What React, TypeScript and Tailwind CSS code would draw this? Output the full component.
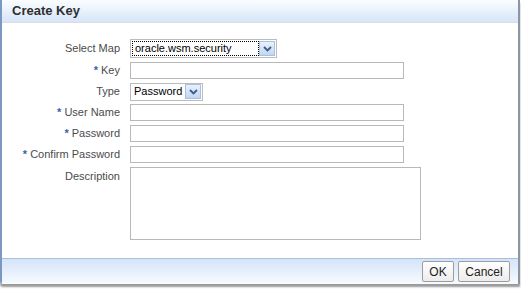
import React from 'react'

const FONT = { fontFamily: '"Liberation Sans", Arial, sans-serif' }

function Chevron() {
  return (
    <span className="flex h-[15px] w-[16px] items-center justify-center border border-[#a9bfe0] bg-gradient-to-b from-[#e9f1fc] to-[#c3d6f1]">
      <svg width="9" height="6" viewBox="0 0 9 6">
        <path d="M1 1 L4.5 4.5 L8 1" fill="none" stroke="#3f5a8c" strokeWidth="1.8" />
      </svg>
    </span>
  )
}

function Label({ text, req }: { text: string; req?: boolean }) {
  return (
    <div className="w-[118px] shrink-0 text-right text-[11px] text-[#4b4b4b]">
      {req && <span className="mr-[3px] font-bold text-[#3b5fa8]">*</span>}
      {text}
    </div>
  )
}

function Field({ w }: { w: string }) {
  return <div className={`h-[17px] border border-[#b8b8b8] bg-white ${w}`} />
}

export default function App() {
  return (
    <div className="h-[289px] w-[521px] overflow-hidden bg-white" style={FONT}>
      <div className="flex w-[520px] flex-col rounded-bl-[3px] border-l-2 border-r-2 border-l-[#7c97c0] border-r-[#8a96a6] shadow-[0_3px_2px_#9a9a9a]">
        {/* header */}
        <div className="flex h-[23px] items-center border-b border-[#d8dde4] bg-gradient-to-b from-[#fbfdff] to-[#d6e5f8] pl-[10px] text-[13px] font-bold text-[#2f2f2f]">
          Create Key
        </div>

        {/* body */}
        <div className="flex h-[235px] flex-col gap-[4px] bg-white pt-[16px]">
          <div className="flex h-[19px] items-center gap-[10px]">
            <Label text="Select Map" />
            <div className="flex h-[19px] w-[147px] items-center border border-[#bcbcbc] bg-white pr-[1px]">
              <div className="ml-[1px] flex h-[15px] flex-1 items-center border border-dotted border-black pl-[2px] text-[11px] text-black">
                oracle.wsm.security
              </div>
              <Chevron />
            </div>
          </div>
          <div className="flex h-[17px] items-center gap-[10px]">
            <Label text="Key" req />
            <Field w="w-[274px]" />
          </div>
          <div className="flex h-[17px] items-center gap-[10px]">
            <Label text="Type" />
            <div className="flex h-[18px] w-[73px] items-center border border-[#bcbcbc] bg-white pr-[1px]">
              <div className="flex-1 pl-[3px] text-[11px] text-black">Password</div>
              <Chevron />
            </div>
          </div>
          <div className="flex h-[17px] items-center gap-[10px]">
            <Label text="User Name" req />
            <Field w="w-[274px]" />
          </div>
          <div className="flex h-[17px] items-center gap-[10px]">
            <Label text="Password" req />
            <Field w="w-[274px]" />
          </div>
          <div className="flex h-[17px] items-center gap-[10px]">
            <Label text="Confirm Password" req />
            <Field w="w-[274px]" />
          </div>
          <div className="flex items-start gap-[10px]">
            <div className="pt-[1px]">
              <Label text="Description" />
            </div>
            <div className="h-[73px] w-[291px] border border-[#b8b8b8] bg-white" />
          </div>
        </div>

        {/* footer */}
        <div className="flex h-[26px] items-center justify-end gap-[4px] border-t border-[#a9c0e0] bg-gradient-to-b from-[#d4e4f7] to-[#f7fbff] pr-[8px]">
          <button className="h-[21px] w-[32px] rounded-[2px] border border-[#9d9d9d] bg-gradient-to-b from-white to-[#ececec] text-[12px] text-[#222]">
            OK
          </button>
          <button className="h-[21px] w-[52px] rounded-[2px] border border-[#9d9d9d] bg-gradient-to-b from-white to-[#ececec] text-[12px] text-[#222]">
            Cancel
          </button>
        </div>
      </div>
    </div>
  )
}
